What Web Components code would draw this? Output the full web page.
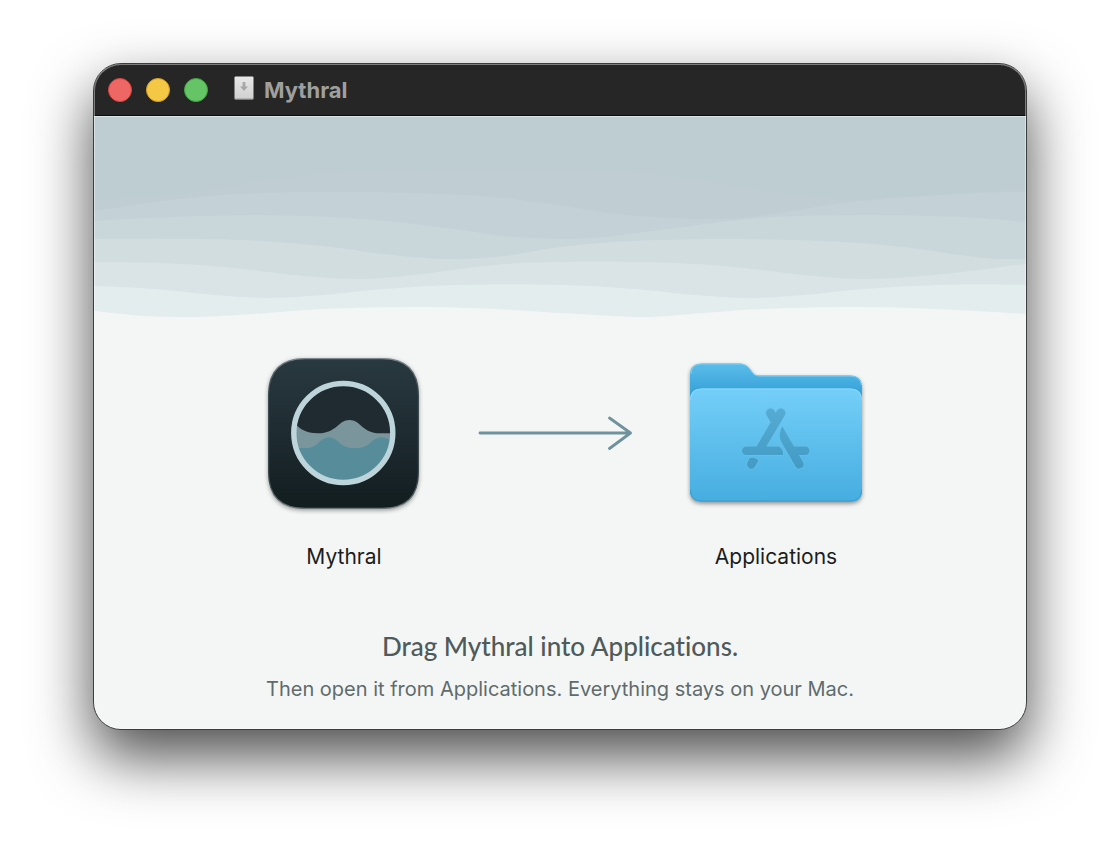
<!DOCTYPE html>
<html lang="en">
<head>
<meta charset="utf-8">
<meta name="viewport" content="width=device-width, initial-scale=1">
<title>Mythral</title>
<style>
  body { margin: 0; padding: 63px 93px 123px; background: #fff; font-family: Inter, "Liberation Sans", sans-serif; }
</style>
</head>
<body>
<disk-window name="Mythral">
  <wave-banner></wave-banner>
  <drag-stage>
    <file-item label="Mythral"><app-icon></app-icon></file-item>
    <drag-arrow></drag-arrow>
    <file-item label="Applications"><folder-icon></folder-icon></file-item>
  </drag-stage>
  <install-hint>
    <span slot="title">Drag Mythral into Applications.</span>
    <span slot="detail">Then open it from Applications. Everything stays on your Mac.</span>
  </install-hint>
</disk-window>

<script>
const define = (name, html, setup) => customElements.define(name, class extends HTMLElement {
  connectedCallback() {
    if (this.shadowRoot) return;
    const template = document.createElement('template');
    template.innerHTML = html;
    this.attachShadow({ mode: 'open' }).append(template.content.cloneNode(true));
    if (setup) setup(this.shadowRoot, this);
  }
});

define('traffic-lights', `
  <style>
    :host { display: flex; gap: 14px; }
    button { width: 24px; height: 24px; padding: 0; border: 1px solid; border-radius: 50%; }
    .close { background: #ee6765; border-color: #d9433f; }
    .minimize { background: #f4c845; border-color: #d7a021; }
    .zoom { background: #65c466; border-color: #3fa63f; }
  </style>
  <button class="close" aria-label="Close"></button>
  <button class="minimize" aria-label="Minimize"></button>
  <button class="zoom" aria-label="Zoom"></button>
`);

define('disk-window', `
  <style>
    :host { display: block; overflow: hidden; position: relative; border: 1px solid #3c3c3c; border-radius: 28px; background: #f4f6f5;
      box-shadow: 0 27px 60px rgba(0,0,0,.7); }
    :host::after { content: ""; position: absolute; inset: 0; border-radius: 27px; pointer-events: none;
      box-shadow: inset 0 0 0 1px rgba(255,255,255,.4); }
    header { display: flex; align-items: center; box-sizing: border-box; height: 52px; padding: 1px 14px 0; background: #262626; border-bottom: 1px solid #0c0c0d; }
    .disk { width: 20px; height: 24px; margin: 0 10px 4px 26px; }
    h1 { margin: 0; font-size: 22px; line-height: 28px; font-weight: 700; color: #a09f9f; }
  </style>
  <header>
    <traffic-lights></traffic-lights>
    <svg class="disk" viewBox="0 0 20 24" aria-hidden="true">
      <defs><linearGradient id="d" x2="0" y2="1"><stop stop-color="#e8e8e8"/><stop offset="1" stop-color="#cfcfcf"/></linearGradient></defs>
      <rect x=".5" y=".5" width="19" height="23" rx="1" fill="url(#d)"/>
      <path d="M1 22.500h18" stroke="#b4b4b4"/>
      <path d="M8.600 6h2.800v4.500h2.600L10 15l-4-4.500h2.600z" fill="#a7a7a7"/>
    </svg>
    <h1></h1>
  </header>
  <main><slot></slot></main>
`, (root, host) => { root.querySelector('h1').textContent = host.getAttribute('name'); });

// Each band runs from its upper edge to the bottom; later bands lie over earlier ones.
const bands = [
  ['#c0ced3', [[-60,92],[0,83],[60,80],[119,73],[169,64],[253,55],[353,53],[450,53],[533,55],[599,62],[666,73],[749,82],[849,77],[932,72],[990,70]]],
  ['#c4d1d6', [[-60,102],[0,94],[86,82],[169,76],[269,75],[386,79],[463,88],[533,98],[609,102],[666,99],[756,85],[866,77],[932,75],[990,75]]],
  ['#c9d6da', [[-60,111],[0,104],[80,100],[169,98],[269,102],[353,111],[410,119],[466,122],[510,120],[566,113],[666,101],[766,98],[866,100],[932,105],[990,114]]],
  ['#d1dddf', [[-60,124],[0,122],[69,122],[149,123],[229,129],[290,137],[353,142],[410,139],[466,130],[540,124],[633,122],[733,124],[810,130],[866,138],[909,142],[990,140]]],
  ['#dae4e6', [[-60,147],[0,145],[66,146],[130,150],[200,158],[263,162],[320,158],[390,149],[453,145],[550,145],[630,149],[710,158],[773,162],[850,157],[932,147],[990,145]]],
  ['#e4edee', [[-40,168],[0,169],[60,172],[120,178],[174,181],[230,178],[290,172],[366,168],[466,168],[540,172],[600,178],[654,181],[710,178],[770,172],[850,168],[932,168],[990,170]]],
  ['#f4f6f5', [[-40,190],[0,194],[50,199],[103,200],[160,197],[230,192],[323,190],[400,192],[466,196],[549,200],[610,196],[670,192],[756,190],[840,192],[932,197],[990,201]]]
];
// Smooth curve through the points (Catmull-Rom to Bézier).
const curve = p => p.slice(1).reduce((d, b, i) => {
  const a = p[i], before = p[i - 1] || a, after = p[i + 2] || b;
  return d + `C${a[0] + (b[0] - before[0]) / 6} ${a[1] + (b[1] - before[1]) / 6} ${b[0] - (after[0] - a[0]) / 6} ${b[1] - (after[1] - a[1]) / 6} ${b[0]} ${b[1]}`;
}, `M${p[0]}`);

define('wave-banner', `
  <style>
    :host { display: block; border-top: 1px solid #dbe6e9; background: #becdd2; }
    svg { display: block; width: 100%; height: 202px; }
  </style>
  <svg viewBox="0 0 932 202" preserveAspectRatio="none" aria-hidden="true">
    ${bands.map(([fill, points]) => `<path fill="${fill}" d="${curve(points)}V210H-60Z"/>`).join('')}
  </svg>
`);

define('drag-stage', `
  <style>
    :host { display: grid; grid-template-columns: repeat(3, 216px); justify-content: center; padding-top: 24px; }
  </style>
  <slot></slot>
`);

define('file-item', `
  <style>
    :host { display: block; }
    figure { display: grid; gap: 20px; margin: 0; }
    figcaption { font-size: 21px; line-height: 28px; text-align: center; color: #1c1d1d; }
  </style>
  <figure><slot></slot><figcaption></figcaption></figure>
`, (root, host) => { root.querySelector('figcaption').textContent = host.getAttribute('label'); });

const iconStyle = '<style>:host { display: block; } svg { display: block; width: 100%; height: 180px; }</style>';

define('app-icon', `${iconStyle}
  <svg viewBox="236 343 216 180" role="img" aria-label="Mythral app">
    <defs>
      <linearGradient id="bg" x2="0" y2="1"><stop stop-color="#293940"/><stop offset=".5" stop-color="#1e2b31"/><stop offset="1" stop-color="#121d1f"/></linearGradient>
      <linearGradient id="rim" x2="0" y2="1"><stop stop-color="#7d888c"/><stop offset=".2" stop-color="#3e4d53"/><stop offset=".8" stop-color="#3a474b"/><stop offset="1" stop-color="#6b7577"/></linearGradient>
      <clipPath id="dial"><circle cx="343.300" cy="433" r="48"/></clipPath>
      <filter id="sh" x="-20%" y="-20%" width="140%" height="140%" color-interpolation-filters="sRGB"><feDropShadow dx="0" dy="1.500" stdDeviation="2.200" flood-opacity=".38"/></filter>
    </defs>
    <path filter="url(#sh)" fill="url(#bg)" stroke="url(#rim)" stroke-width="1.200" d="M305 358.600H382C406 358.600 418.400 371 418.400 395V472C418.400 496 406 508.400 382 508.400H305C281 508.400 268.600 496 268.600 472V395C268.600 371 281 358.600 305 358.600Z"/>
    <g clip-path="url(#dial)">
      <path fill="#1f2a31" d="M290 380h108v106H290z"/>
      <path fill="#7a959c" d="M290 419C297 425 301 433.300 318 433.300C337 433.300 338 420 349.500 420C361 420 362 433.300 380 433.300H400V490H290Z"/>
      <path fill="#578c9a" d="M290 448H306C319 448 319 437.500 329 437.500C339 437.500 339 448 353 448H357C371 448 371 437.500 381 437.500C388 437.500 391 441 398 446V490H290Z"/>
    </g>
    <circle cx="343.300" cy="433" r="49.500" fill="none" stroke="#bdd5da" stroke-width="5.400"/>
  </svg>
`);

define('folder-icon', `${iconStyle}
  <svg viewBox="668 343 216 180" role="img" aria-label="Applications folder">
    <defs>
      <linearGradient id="back" gradientUnits="userSpaceOnUse" x1="0" x2="0" y1="363" y2="400"><stop stop-color="#5cbdea"/><stop offset="1" stop-color="#2e9bd4"/></linearGradient>
      <linearGradient id="front" x2="0" y2="1"><stop stop-color="#74cff8"/><stop offset="1" stop-color="#46ade0"/></linearGradient>
      <linearGradient id="mark" gradientUnits="userSpaceOnUse" x1="0" x2="0" y1="408" y2="470"><stop stop-color="#55abd3"/><stop offset="1" stop-color="#429bc5"/></linearGradient>
      <filter id="sh" x="-10%" y="-10%" width="120%" height="125%" color-interpolation-filters="sRGB"><feDropShadow dx="0" dy="2" stdDeviation="2" flood-opacity=".42"/></filter>
    </defs>
    <g filter="url(#sh)">
      <path fill="url(#back)" d="M690 375Q690 363.500 702 363.500H738C744 363.500 747 365 750 369L753 373Q755 375.600 760 375.600H850Q862 375.600 862 388V490Q862 501.500 850 501.500H702Q690 501.500 690 490Z"/>
      <path fill="url(#front)" d="M690 400Q690 388.500 702 388.500H850Q862 388.500 862 400V490Q862 501.500 850 501.500H702Q690 501.500 690 490Z"/>
    </g>
    <path fill="none" stroke="#8ed9fa" d="M690.500 400Q690.500 389 702 389H850Q861.500 389 861.500 400"/>
    <path fill="none" stroke="#3a9fd3" d="M690.500 490Q690.500 501 702 501H850Q861.500 501 861.500 490"/>
    <path fill="none" stroke="#7bcdf2" d="M691 374Q691 364 702 364H738C744 364 747 365.500 750 369.500L753 373.500Q755 376.100 760 376.100H850Q860 376.100 861.500 385"/>
    <g fill="url(#mark)" stroke="#69c0e9" stroke-width="1.400" stroke-linejoin="round" paint-order="stroke">
      <path d="M766.700 415.200A4.400 4.400 0 0 1 774.400 410.800L775.700 413L777 410.800A4.400 4.400 0 0 1 784.700 415.200L766.300 446.500H779Q783.300 448.500 783 455H746.200A4.250 4.250 0 0 1 746.200 446.500H756.500L770.800 422.300Z"/>
      <path d="M782.300 426.500L794 446.500H805.300A4.250 4.250 0 0 1 805.300 455H799L803.200 462.300A4.400 4.400 0 0 1 795.600 466.700L780.800 441Q778 434 782.300 426.500Z"/>
      <path d="M749.700 458Q754.500 456.500 758.600 460.200L755.200 466.600A4.400 4.400 0 0 1 747.500 462.200Z"/>
    </g>
  </svg>
`);

define('drag-arrow', `${iconStyle}
  <svg viewBox="452 343 216 180" aria-hidden="true">
    <path d="M480 433H630.500M609.500 418L630.500 433L609.500 448.500" fill="none" stroke="#6f929c" stroke-width="2.800" stroke-linecap="round" stroke-linejoin="round"/>
  </svg>
`);

define('install-hint', `
  <style>
    :host { display: block; padding: 59px 24px 26px; text-align: center; }
    h2, p { margin: 0; }
    h2 { font-family: Lato, "Liberation Sans", sans-serif; font-size: 26px; line-height: 32px; font-weight: 500; font-variant-ligatures: none; color: #4f5a5b; }
    p { margin-top: 13px; font-size: 20px; line-height: 28px; color: #5f6b6c; }
  </style>
  <h2><slot name="title"></slot></h2>
  <p><slot name="detail"></slot></p>
`);
</script>
</body>
</html>
